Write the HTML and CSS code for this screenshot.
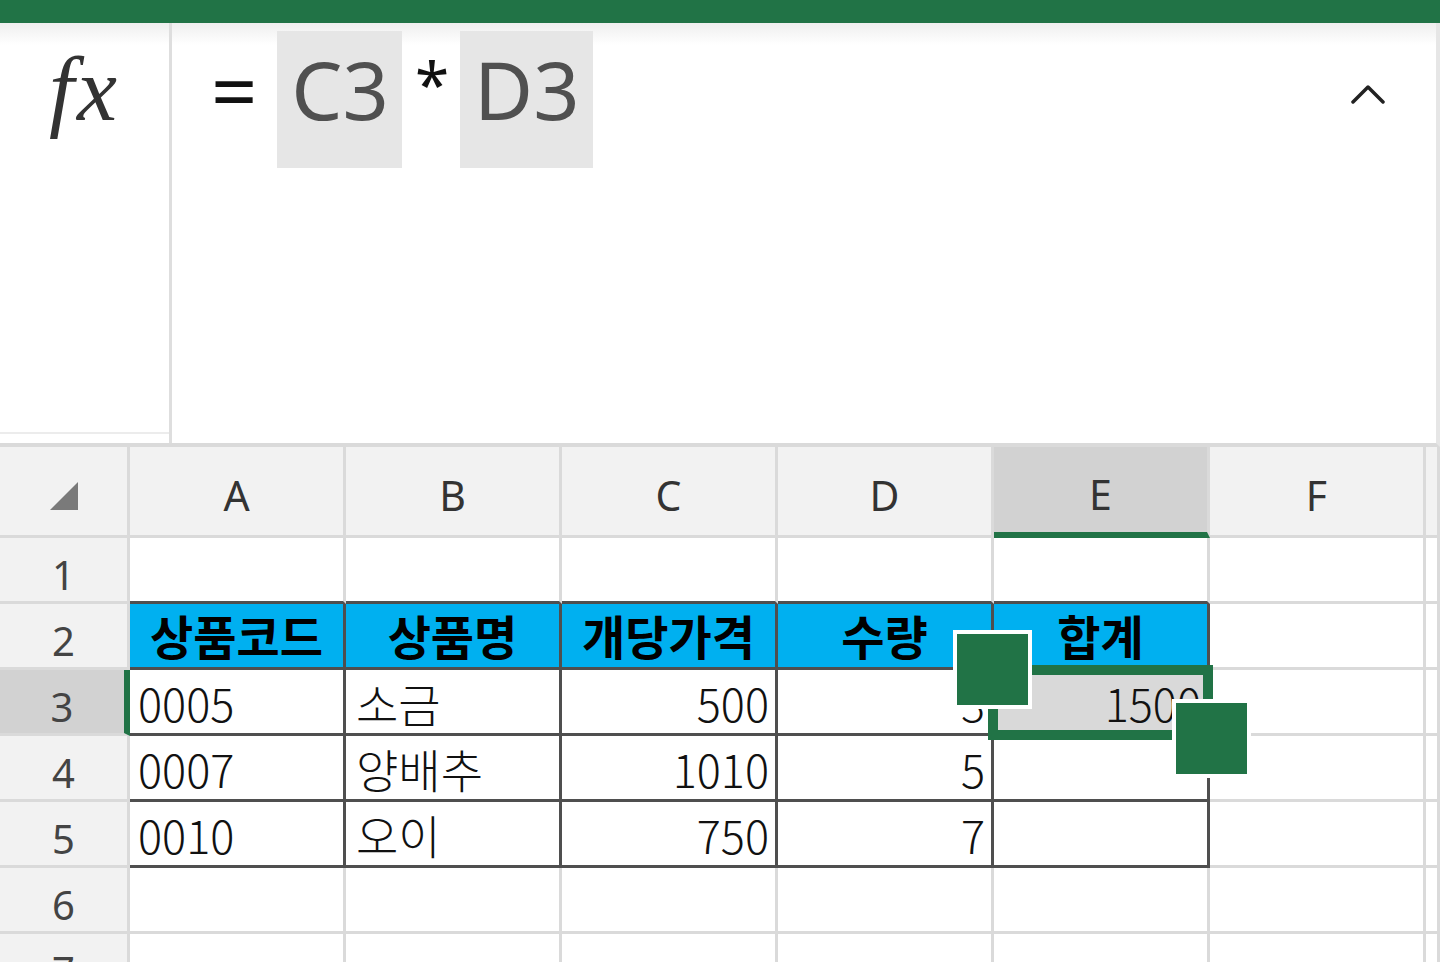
FILE: index.html
```html
<!DOCTYPE html>
<html lang="ko">
<head>
    <meta charset="UTF-8">
    <meta name="viewport" content="width=device-width, initial-scale=1.0">
    <title>통합 문서 - Excel</title>
    <link rel="stylesheet" href="styles.css">
</head>
<body>
    <div class="ribbon"></div>

    <div class="formula-bar">
        <div class="fx-box"><span class="fx">fx</span></div>
        <div class="formula">
            <span class="op eq">=</span>
            <span class="ref">C3</span>
            <span class="op mul">*</span>
            <span class="ref">D3</span>
        </div>
        <div class="collapse">
            <svg width="34" height="20" viewBox="0 0 34 20">
                <polyline points="2,18 17,3 32,18" fill="none" stroke="#222" stroke-width="3.5" stroke-linecap="round" stroke-linejoin="round"/>
            </svg>
        </div>
    </div>

    <div class="sheet">
        <!-- column headers -->
        <div class="c corner">
            <svg width="30" height="30" viewBox="0 0 30 30"><polygon points="29,1 29,29 1,29" fill="#7a7a7a"/></svg>
        </div>
        <div class="c hd">A</div>
        <div class="c hd">B</div>
        <div class="c hd">C</div>
        <div class="c hd">D</div>
        <div class="c hd on">E</div>
        <div class="c hd">F</div>
        <div class="c hd"></div>

        <!-- row 1 -->
        <div class="c rh">1</div>
        <div class="c above"></div>
        <div class="c above"></div>
        <div class="c above"></div>
        <div class="c above"></div>
        <div class="c above"></div>
        <div class="c"></div>
        <div class="c"></div>

        <!-- row 2 -->
        <div class="c rh">2</div>
        <div class="c t th">상품코드</div>
        <div class="c t th">상품명</div>
        <div class="c t th">개당가격</div>
        <div class="c t th">수량</div>
        <div class="c t th">합계</div>
        <div class="c"></div>
        <div class="c"></div>

        <!-- row 3 -->
        <div class="c rh on">3</div>
        <div class="c t val">0005</div>
        <div class="c t val kr">소금</div>
        <div class="c t val num">500</div>
        <div class="c t val num">3</div>
        <div class="c t val num active">1500</div>
        <div class="c"></div>
        <div class="c"></div>

        <!-- row 4 -->
        <div class="c rh">4</div>
        <div class="c t val">0007</div>
        <div class="c t val kr">양배추</div>
        <div class="c t val num">1010</div>
        <div class="c t val num">5</div>
        <div class="c t val num"></div>
        <div class="c"></div>
        <div class="c"></div>

        <!-- row 5 -->
        <div class="c rh">5</div>
        <div class="c t val">0010</div>
        <div class="c t val kr">오이</div>
        <div class="c t val num">750</div>
        <div class="c t val num">7</div>
        <div class="c t val num"></div>
        <div class="c"></div>
        <div class="c"></div>

        <!-- row 6 -->
        <div class="c rh">6</div>
        <div class="c"></div>
        <div class="c"></div>
        <div class="c"></div>
        <div class="c"></div>
        <div class="c"></div>
        <div class="c"></div>
        <div class="c"></div>

        <!-- row 7 -->
        <div class="c rh">7</div>
        <div class="c"></div>
        <div class="c"></div>
        <div class="c"></div>
        <div class="c"></div>
        <div class="c"></div>
        <div class="c"></div>
        <div class="c"></div>

        <!-- selection of E3 -->
        <div class="selection"></div>
        <div class="handle handle-start"></div>
        <div class="handle handle-end"></div>
    </div>
</body>
</html>
```

FILE: styles.css
```css
html, body {
    margin: 0;
    padding: 0;
    height: 962px;
    overflow: hidden;
    background: #fff;
    font-family: "Noto Sans", "Noto Sans CJK KR", sans-serif;
}

.ribbon {
    height: 23px;
    background: #217346;
}

/* formula bar */

.formula-bar {
    display: flex;
    height: 424px;
    box-sizing: border-box;
    border-bottom: 4px solid #dadada;
    border-right: 4px solid #e6e6e6;
    background: linear-gradient(#efefef, #fff 22px);
}

.fx-box {
    width: 169px;
    height: 411px;
    box-sizing: border-box;
    border-bottom: 2px solid #ececec;
    display: flex;
    justify-content: center;
    padding-top: 22px;
}

.fx {
    font-family: "Liberation Serif", serif;
    font-style: italic;
    font-size: 90px;
    line-height: 90px;
    letter-spacing: 3px;
    color: #333;
}

.formula {
    flex: 1;
    display: flex;
    align-items: flex-start;
    padding-top: 8px;
    padding-left: 39px;
    border-left: 3px solid #dedede;
    font-size: 81px;
    line-height: 81px;
}

.op {
    padding-top: 17px;
    color: #111;
}

.op.eq {
    margin-right: 20px;
}

.op.mul {
    font-size: 62px;
    padding-top: 12px;
    margin: 0 11px 0 13px;
}

.ref {
    height: 137px;
    box-sizing: border-box;
    padding: 17px 13px 0 14px;
    background: #e6e6e6;
    color: #505050;
}

.collapse {
    padding-top: 61px;
    padding-right: 51px;
}

/* sheet grid */

.sheet {
    position: relative;
    display: grid;
    grid-template-columns: 130px repeat(6, 216px) 1fr;
    grid-template-rows: 91px repeat(7, 66px);
}

.c {
    box-sizing: border-box;
    border-right: 3px solid #dadada;
    border-bottom: 3px solid #dadada;
    display: flex;
    align-items: center;
    white-space: nowrap;
    line-height: 1.2;
}

.corner {
    background: #f2f2f2;
    justify-content: flex-end;
    padding: 10px 48px 0 0;
}

.hd {
    background: #f2f2f2;
    justify-content: center;
    padding-top: 10px;
    font-size: 41px;
    color: #333;
}

.hd.on {
    background: #d2d2d2;
    border-bottom: 6px solid #217346;
}

.rh {
    background: #f2f2f2;
    justify-content: center;
    padding-top: 10px;
    font-size: 40px;
    color: #444;
}

.rh.on {
    background: #d2d2d2;
    border-right: 6px solid #217346;
}

/* bordered table A2:E5 */

.above {
    border-bottom-color: #4f4f4f;
}

.t {
    border-right-color: #4f4f4f;
    border-bottom-color: #4f4f4f;
}

.th {
    background: #00b0f0;
    justify-content: center;
    font-family: "Noto Sans CJK KR", sans-serif;
    font-weight: 700;
    font-size: 47px;
    color: #000;
}

.val {
    font-family: "Noto Sans CJK KR", sans-serif;
    font-weight: 300;
    font-size: 45px;
    color: #111;
    padding: 2px 0 0 8px;
}

.val.kr {
    font-size: 46px;
    padding-left: 10px;
}

.val.num {
    justify-content: flex-end;
    padding: 2px 6px 0 0;
}

.val.active {
    background: #d9d9d9;
}

/* selection overlay */

.selection {
    position: absolute;
    left: 988px;
    top: 218px;
    width: 225px;
    height: 75px;
    box-sizing: border-box;
    border: 10px solid #217346;
}

.handle {
    position: absolute;
    width: 79px;
    height: 79px;
    box-sizing: border-box;
    background: #217346;
    border: 4px solid #fff;
}

.handle-start {
    left: 953px;
    top: 183px;
}

.handle-end {
    left: 1172px;
    top: 252px;
}
```
